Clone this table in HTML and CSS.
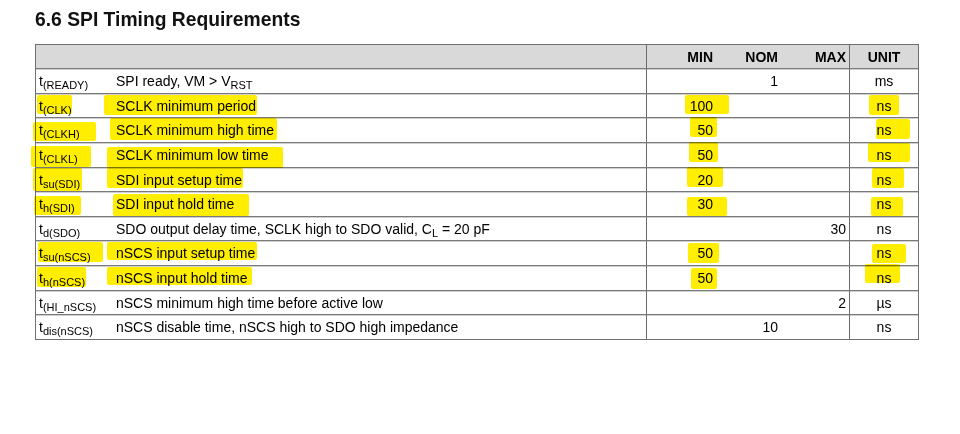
FILE: index.html
```html
<!DOCTYPE html>
<html lang="en">
<head>
<meta charset="utf-8">
<title>6.6 SPI Timing Requirements</title>
<link rel="stylesheet" href="styles.css">
</head>
<body>
<h1 class="title">6.6 SPI Timing Requirements</h1>
<div class="sheet">
  <div class="spec">
    <div class="row head">
      <div class="c sym"></div>
      <div class="c desc"></div>
      <div class="c num min">MIN</div>
      <div class="c num nom">NOM</div>
      <div class="c num max">MAX</div>
      <div class="c unit">UNIT</div>
    </div>
    <div class="row">
      <div class="c sym">t<sub>(READY)</sub></div>
      <div class="c desc">SPI ready, VM &gt; V<sub>RST</sub></div>
      <div class="c num min"></div>
      <div class="c num nom">1</div>
      <div class="c num max"></div>
      <div class="c unit">ms</div>
    </div>
    <div class="row">
      <div class="c sym">t<sub>(CLK)</sub></div>
      <div class="c desc">SCLK minimum period</div>
      <div class="c num min">100</div>
      <div class="c num nom"></div>
      <div class="c num max"></div>
      <div class="c unit">ns</div>
    </div>
    <div class="row">
      <div class="c sym">t<sub>(CLKH)</sub></div>
      <div class="c desc">SCLK minimum high time</div>
      <div class="c num min">50</div>
      <div class="c num nom"></div>
      <div class="c num max"></div>
      <div class="c unit">ns</div>
    </div>
    <div class="row">
      <div class="c sym">t<sub>(CLKL)</sub></div>
      <div class="c desc">SCLK minimum low time</div>
      <div class="c num min">50</div>
      <div class="c num nom"></div>
      <div class="c num max"></div>
      <div class="c unit">ns</div>
    </div>
    <div class="row">
      <div class="c sym">t<sub>su(SDI)</sub></div>
      <div class="c desc">SDI input setup time</div>
      <div class="c num min">20</div>
      <div class="c num nom"></div>
      <div class="c num max"></div>
      <div class="c unit">ns</div>
    </div>
    <div class="row">
      <div class="c sym">t<sub>h(SDI)</sub></div>
      <div class="c desc">SDI input hold time</div>
      <div class="c num min">30</div>
      <div class="c num nom"></div>
      <div class="c num max"></div>
      <div class="c unit">ns</div>
    </div>
    <div class="row">
      <div class="c sym">t<sub>d(SDO)</sub></div>
      <div class="c desc">SDO output delay time, SCLK high to SDO valid, C<sub>L</sub> = 20 pF</div>
      <div class="c num min"></div>
      <div class="c num nom"></div>
      <div class="c num max">30</div>
      <div class="c unit">ns</div>
    </div>
    <div class="row">
      <div class="c sym">t<sub>su(nSCS)</sub></div>
      <div class="c desc">nSCS input setup time</div>
      <div class="c num min">50</div>
      <div class="c num nom"></div>
      <div class="c num max"></div>
      <div class="c unit">ns</div>
    </div>
    <div class="row">
      <div class="c sym">t<sub>h(nSCS)</sub></div>
      <div class="c desc">nSCS input hold time</div>
      <div class="c num min">50</div>
      <div class="c num nom"></div>
      <div class="c num max"></div>
      <div class="c unit">ns</div>
    </div>
    <div class="row">
      <div class="c sym">t<sub>(HI_nSCS)</sub></div>
      <div class="c desc">nSCS minimum high time before active low</div>
      <div class="c num min"></div>
      <div class="c num nom"></div>
      <div class="c num max">2</div>
      <div class="c unit">µs</div>
    </div>
    <div class="row">
      <div class="c sym">t<sub>dis(nSCS)</sub></div>
      <div class="c desc">nSCS disable time, nSCS high to SDO high impedance</div>
      <div class="c num min"></div>
      <div class="c num nom">10</div>
      <div class="c num max"></div>
      <div class="c unit">ns</div>
    </div>
  </div>
  <div class="marks" aria-hidden="true">
    <i class="mk m1"></i><i class="mk m2"></i><i class="mk m3"></i><i class="mk m4"></i>
    <i class="mk m5"></i><i class="mk m6"></i><i class="mk m7"></i><i class="mk m8"></i>
    <i class="mk m9"></i><i class="mk m10"></i><i class="mk m11"></i><i class="mk m12"></i>
    <i class="mk m13"></i><i class="mk m14"></i><i class="mk m15"></i><i class="mk m16"></i>
    <i class="mk m17"></i><i class="mk m18"></i><i class="mk m19"></i><i class="mk m20"></i>
    <i class="mk m21"></i><i class="mk m22"></i><i class="mk m23"></i><i class="mk m24"></i>
    <i class="mk m25"></i><i class="mk m26"></i><i class="mk m27"></i><i class="mk m28"></i>
  </div>
</div>
</body>
</html>
```

FILE: styles.css
```css
html, body {
  margin: 0;
  padding: 0;
  background: #ffffff;
}

body {
  font-family: "Liberation Sans", Arial, sans-serif;
  color: #000;
}

.title {
  margin: 10px 0 14px 35px;
  height: 20px;
  font-size: 19.3px;
  line-height: 20px;
  font-weight: bold;
  color: #111;
}

.sheet {
  position: relative;
  margin-left: 35px;
  width: 884px;
}

.spec {
  border: 1px solid #6f6f6f;
  border-bottom: none;
  font-size: 14px;
  line-height: 16px;
}

.row {
  display: grid;
  grid-template-columns: 80px 531px 68px 67px 68px 68px;
  height: 24.64px;
  box-sizing: border-box;
  border-bottom: 1px solid #7a7a7a;
  box-shadow: 0 1px 0 #d0d0d0;
}

.row:last-child {
  box-shadow: none;
  border-bottom-color: #6f6f6f;
}

.row.head {
  height: 24px;
  background: #d9d9d9;
  font-weight: bold;
}

.c {
  display: block;
  white-space: nowrap;
  box-sizing: border-box;
  padding-top: 4px;
}

.head .c {
  padding-top: 3.5px;
}

.sym {
  padding-left: 3px;
}

.desc {
  border-right: 1px solid #6a6a6a;
}

.num {
  text-align: right;
}

.min { padding-right: 2px; }
.nom { padding-right: 4px; }
.max { padding-right: 3px; border-right: 1px solid #6a6a6a; }

.unit {
  text-align: center;
}

sub {
  font-size: 11px;
  line-height: 0;
  vertical-align: -3px;
}

.marks {
  position: absolute;
  inset: 0;
  pointer-events: none;
}

.mk {
  position: absolute;
  display: block;
  background: #ffee00;
  border-radius: 2px;
  mix-blend-mode: multiply;
}

.m1  { left: 2px;   top: 51px;  width: 35px;  height: 19px; }
.m2  { left: 69px;  top: 51px;  width: 153px; height: 20px; }
.m3  { left: 650px; top: 51px;  width: 44px;  height: 19px; }
.m4  { left: 834px; top: 51px;  width: 30px;  height: 20px; }
.m5  { left: -2px;  top: 78px;  width: 63px;  height: 19px; }
.m6  { left: 75px;  top: 74px;  width: 167px; height: 22px; }
.m7  { left: 655px; top: 73px;  width: 27px;  height: 20px; }
.m8  { left: 841px; top: 75px;  width: 34px;  height: 20px; }
.m9  { left: -4px;  top: 102px; width: 60px;  height: 21px; }
.m10 { left: 72px;  top: 103px; width: 176px; height: 21px; }
.m11 { left: 654px; top: 98px;  width: 29px;  height: 20px; }
.m12 { left: 833px; top: 99px;  width: 42px;  height: 19px; }
.m13 { left: -2px;  top: 124px; width: 49px;  height: 23px; }
.m14 { left: 72px;  top: 124px; width: 136px; height: 20px; }
.m15 { left: 652px; top: 123px; width: 36px;  height: 20px; }
.m16 { left: 837px; top: 124px; width: 32px;  height: 20px; }
.m17 { left: -1px;  top: 152px; width: 47px;  height: 19px; }
.m18 { left: 78px;  top: 150px; width: 136px; height: 22px; }
.m19 { left: 652px; top: 153px; width: 40px;  height: 19px; }
.m20 { left: 836px; top: 153px; width: 32px;  height: 19px; }
.m21 { left: 3px;   top: 198px; width: 65px;  height: 20px; }
.m22 { left: 72px;  top: 198px; width: 150px; height: 18px; }
.m23 { left: 653px; top: 199px; width: 31px;  height: 20px; }
.m24 { left: 837px; top: 200px; width: 34px;  height: 19px; }
.m25 { left: 2px;   top: 223px; width: 49px;  height: 20px; }
.m26 { left: 72px;  top: 223px; width: 145px; height: 18px; }
.m27 { left: 656px; top: 224px; width: 26px;  height: 21px; }
.m28 { left: 830px; top: 220px; width: 35px;  height: 19px; }
```
